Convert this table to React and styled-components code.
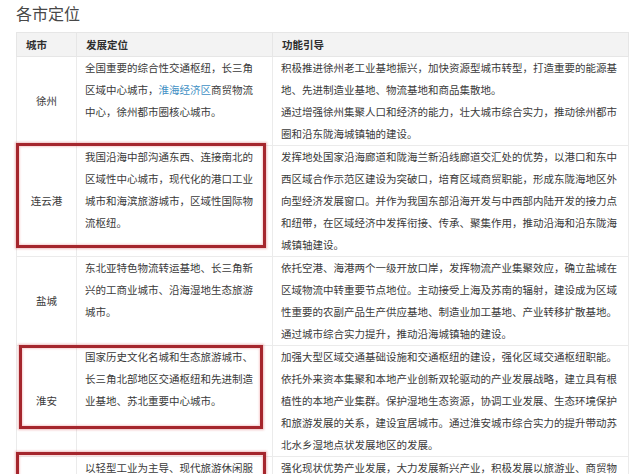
import React from "react";
import styled, { createGlobalStyle } from "styled-components";

const Global = createGlobalStyle`
  html, body { margin: 0; padding: 0; background: #ffffff; }
  body {
    font-family: "Noto Sans CJK SC", "Noto Sans", sans-serif;
    color: #3a3a3a;
    overflow: hidden;
  }
`;

const Page = styled.div`
  padding: 1px 0 0 16px;
  width: 624px;
`;

const Title = styled.h2`
  margin: 0;
  font-size: 16px;
  line-height: 24px;
  font-weight: 400;
  color: #484848;
`;

const Table = styled.table`
  margin-top: 7px;
  width: 612px;
  border-collapse: collapse;
  table-layout: fixed;
  border: 1px solid #e3e3e3;
  font-size: 10.5px;
  line-height: 22px;
`;

const HeadCell = styled.th`
  box-sizing: border-box;
  width: ${(p) => p.$w}px;
  height: 24px;
  padding: 0 8px 0 9px;
  background: #f3f3f3;
  border: 1px solid #e6e6e6;
  text-align: left;
  font-weight: 700;
  color: #2e2e2e;
`;

const Cell = styled.td`
  box-sizing: border-box;
  padding: 0 ${(p) => p.$pr}px 0 8px;
  border: 1px solid #ebebeb;
  vertical-align: top;
  color: #3a3a3a;
  word-break: break-all;
`;

const CityCell = styled.td`
  position: relative;
  box-sizing: border-box;
  padding: 0 4px;
  border: 1px solid #ebebeb;
  vertical-align: middle;
  text-align: center;
  color: #3a3a3a;
`;

const Para = styled.div``;

const Link = styled.span`
  color: #3f90c4;
`;

const Mark = styled.div`
  position: absolute;
  left: ${(p) => p.$l}px;
  top: ${(p) => p.$t}px;
  width: ${(p) => p.$w}px;
  height: ${(p) => p.$h}px;
  box-sizing: border-box;
  border: 3px solid #a5262d;
  box-shadow: 0 0 2px 1px rgba(205, 70, 75, 0.35),
    inset 0 0 2px 1px rgba(235, 120, 125, 0.35);
  pointer-events: none;
`;

const rows = [
  {
    city: "徐州",
    pos: (
      <>
        全国重要的综合性交通枢纽，长三角区域中心城市，<Link>淮海经济区</Link>
        商贸物流中心，徐州都市圈核心城市。
      </>
    ),
    guide: [
      "积极推进徐州老工业基地振兴，加快资源型城市转型，打造重要的能源基地、先进制造业基地、物流基地和商品集散地。",
      "通过增强徐州集聚人口和经济的能力，壮大城市综合实力，推动徐州都市圈和沿东陇海城镇轴的建设。",
    ],
  },
  {
    city: "连云港",
    pos: "我国沿海中部沟通东西、连接南北的区域性中心城市，现代化的港口工业城市和海滨旅游城市，区域性国际物流枢纽。",
    guide: [
      "发挥地处国家沿海廊道和陇海兰新沿线廊道交汇处的优势，以港口和东中西区域合作示范区建设为突破口，培育区域商贸职能，形成东陇海地区外向型经济发展窗口。并作为我国东部沿海开发与中西部内陆开发的接力点和纽带，在区域经济中发挥衔接、传承、聚集作用，推动沿海和沿东陇海城镇轴建设。",
    ],
    mark: { t: -3, h: 105, w: 250, l: -1 },
  },
  {
    city: "盐城",
    pos: "东北亚特色物流转运基地、长三角新兴的工商业城市、沿海湿地生态旅游城市。",
    guide: [
      "依托空港、海港两个一级开放口岸，发挥物流产业集聚效应，确立盐城在区域物流中转重要节点地位。主动接受上海及苏南的辐射，建设成为区域性重要的农副产品生产供应基地、制造业加工基地、产业转移扩散基地。",
      "通过城市综合实力提升，推动沿海城镇轴的建设。",
    ],
  },
  {
    city: "淮安",
    pos: "国家历史文化名城和生态旅游城市、长三角北部地区交通枢纽和先进制造业基地、苏北重要中心城市。",
    guide: [
      "加强大型区域交通基础设施和交通枢纽的建设，强化区域交通枢纽职能。依托外来资本集聚和本地产业创新双轮驱动的产业发展战略，建立具有根植性的本地产业集群。保护湿地生态资源，协调工业发展、生态环境保护和旅游发展的关系，建设宜居城市。通过淮安城市综合实力的提升带动苏北水乡湿地点状发展地区的发展。",
    ],
    mark: { t: -1, h: 84, w: 244, l: 2 },
  },
  {
    city: "宿迁",
    pos: "以轻型工业为主导、现代旅游休闲服务业发达的生态园林城市。",
    guide: [
      "强化现状优势产业发展，大力发展新兴产业，积极发展以旅游业、商贸物流业为主的现代服务业。",
    ],
    mark: { t: -5, h: 90, w: 250, l: -1 },
  },
];

export default function App() {
  return (
    <>
      <Global />
      <Page>
        <Title>各市定位</Title>
        <Table>
          <thead>
            <tr>
              <HeadCell $w={60}>城市</HeadCell>
              <HeadCell $w={196}>发展定位</HeadCell>
              <HeadCell $w={356}>功能引导</HeadCell>
            </tr>
          </thead>
          <tbody>
            {rows.map((r) => (
              <tr key={r.city}>
                <CityCell>
                  {r.city}
                  {r.mark && (
                    <Mark $t={r.mark.t} $h={r.mark.h} $w={r.mark.w} $l={r.mark.l} />
                  )}
                </CityCell>
                <Cell $pr={15}>{r.pos}</Cell>
                <Cell $pr={8}>
                  {r.guide.map((g, i) => (
                    <Para key={i}>{g}</Para>
                  ))}
                </Cell>
              </tr>
            ))}
          </tbody>
        </Table>
      </Page>
    </>
  );
}
